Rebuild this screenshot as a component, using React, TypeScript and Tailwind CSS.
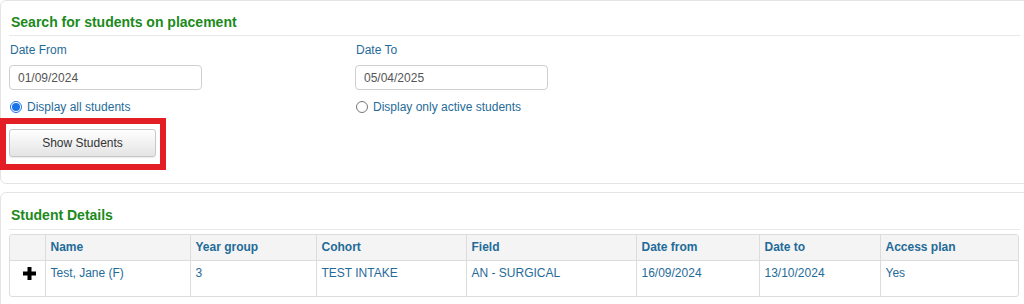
import React from 'react';

const COLS = [
  { label: '', w: 'w-[36px]' },
  { label: 'Name', w: 'w-[145px]' },
  { label: 'Year group', w: 'w-[126px]' },
  { label: 'Cohort', w: 'w-[150px]' },
  { label: 'Field', w: 'w-[170px]' },
  { label: 'Date from', w: 'w-[123px]' },
  { label: 'Date to', w: 'w-[121px]' },
  { label: 'Access plan', w: 'w-[139px]' },
];

const ROW = ['Test, Jane (F)', '3', 'TEST INTAKE', 'AN - SURGICAL', '16/09/2024', '13/10/2024', 'Yes'];

const DateField = ({ label, value }: { label: string; value: string }) => (
  <div className="w-[346px]">
    <div className="h-[26px] pt-[5px] pl-[1px] text-[12px] text-[#1f6b99]">{label}</div>
    <input
      readOnly
      value={value}
      className="mt-[3px] h-[25px] w-[193px] rounded-[4px] border border-[#cfcfcf] bg-white pl-[8px] text-[12px] text-[#555] outline-none"
    />
  </div>
);

const Radio = ({ label, checked }: { label: string; checked?: boolean }) => (
  <label className="flex w-[346px] items-center gap-[5px] text-[12px] text-[#1f6b99]">
    <span
      className={`ml-[1px] flex h-[12px] w-[12px] items-center justify-center rounded-full border ${
        checked ? 'border-[#1a73e8] bg-white' : 'border-[#767676] bg-white'
      }`}
    >
      {checked && <span className="h-[8px] w-[8px] rounded-full bg-[#1a73e8]" />}
    </span>
    {label}
  </label>
);

export default function App() {
  return (
    <div className="h-[304px] w-[1024px] overflow-hidden bg-white font-['Liberation_Sans',Arial,sans-serif]">
      {/* Search panel */}
      <div className="h-[184px] w-[1029px] rounded-l-[6px] border border-[#e4e4e4] px-[8px]">
        <h2 className="h-[35px] border-b border-[#e8e8e8] pt-[12px] pl-[2px] text-[14px] leading-[18px] font-bold text-[#1b8a1b]">
          Search for students on placement
        </h2>
        <div className="flex">
          <DateField label="Date From" value="01/09/2024" />
          <DateField label="Date To" value="05/04/2025" />
        </div>
        <div className="mt-[10px] flex h-[14px]">
          <Radio label="Display all students" checked />
          <Radio label="Display only active students" />
        </div>
        <div className="mt-[4px] -ml-[9px] w-[166px] border-[6px] border-[#e31e24] px-[3px] pt-[5px] pb-[7px]">
          <button className="h-[28px] w-[147px] rounded-[3px] border border-[#c8c8c8] bg-gradient-to-b from-white to-[#e4e4e4] text-[12px] text-[#333] shadow-[0_1px_1px_rgba(0,0,0,0.08)]">
            Show Students
          </button>
        </div>
      </div>

      {/* Student details panel */}
      <div className="mt-[8px] h-[130px] w-[1029px] rounded-l-[6px] border border-[#e4e4e4] px-[8px]">
        <h2 className="h-[37px] border-b border-[#e8e8e8] pt-[13px] pl-[2px] text-[14px] leading-[18px] font-bold text-[#1b8a1b]">
          Student Details
        </h2>
        <div className="mt-[4px] w-[1010px] overflow-hidden rounded-[3px] border border-[#dcdcdc]">
          <table className="w-full table-fixed border-collapse text-[12px] text-[#1f6b99]">
            <colgroup>
              {COLS.map((c, i) => (
                <col key={i} className={i === 0 ? 'w-[35px]' : c.w} />
              ))}
            </colgroup>
            <thead>
              <tr className="h-[25px] bg-[#f4f4f4]">
                {COLS.map((c, i) => (
                  <th
                    key={i}
                    className="border-b border-l border-[#dcdcdc] px-[5px] text-left font-bold first:border-l-0"
                  >
                    {c.label}
                  </th>
                ))}
              </tr>
            </thead>
            <tbody>
              <tr className="h-[36px]">
                <td className="pt-[6px] align-top">
                  <svg width="13" height="13" viewBox="0 0 13 13" className="ml-[13px]">
                    <path d="M4.5 0h4v4.5H13v4H8.5V13h-4V8.5H0v-4h4.5z" fill="#000" />
                  </svg>
                </td>
                {ROW.map((v, i) => (
                  <td key={i} className="border-l border-[#dcdcdc] px-[5px] pt-[3px] align-top">
                    {v}
                  </td>
                ))}
              </tr>
            </tbody>
          </table>
        </div>
      </div>
    </div>
  );
}
